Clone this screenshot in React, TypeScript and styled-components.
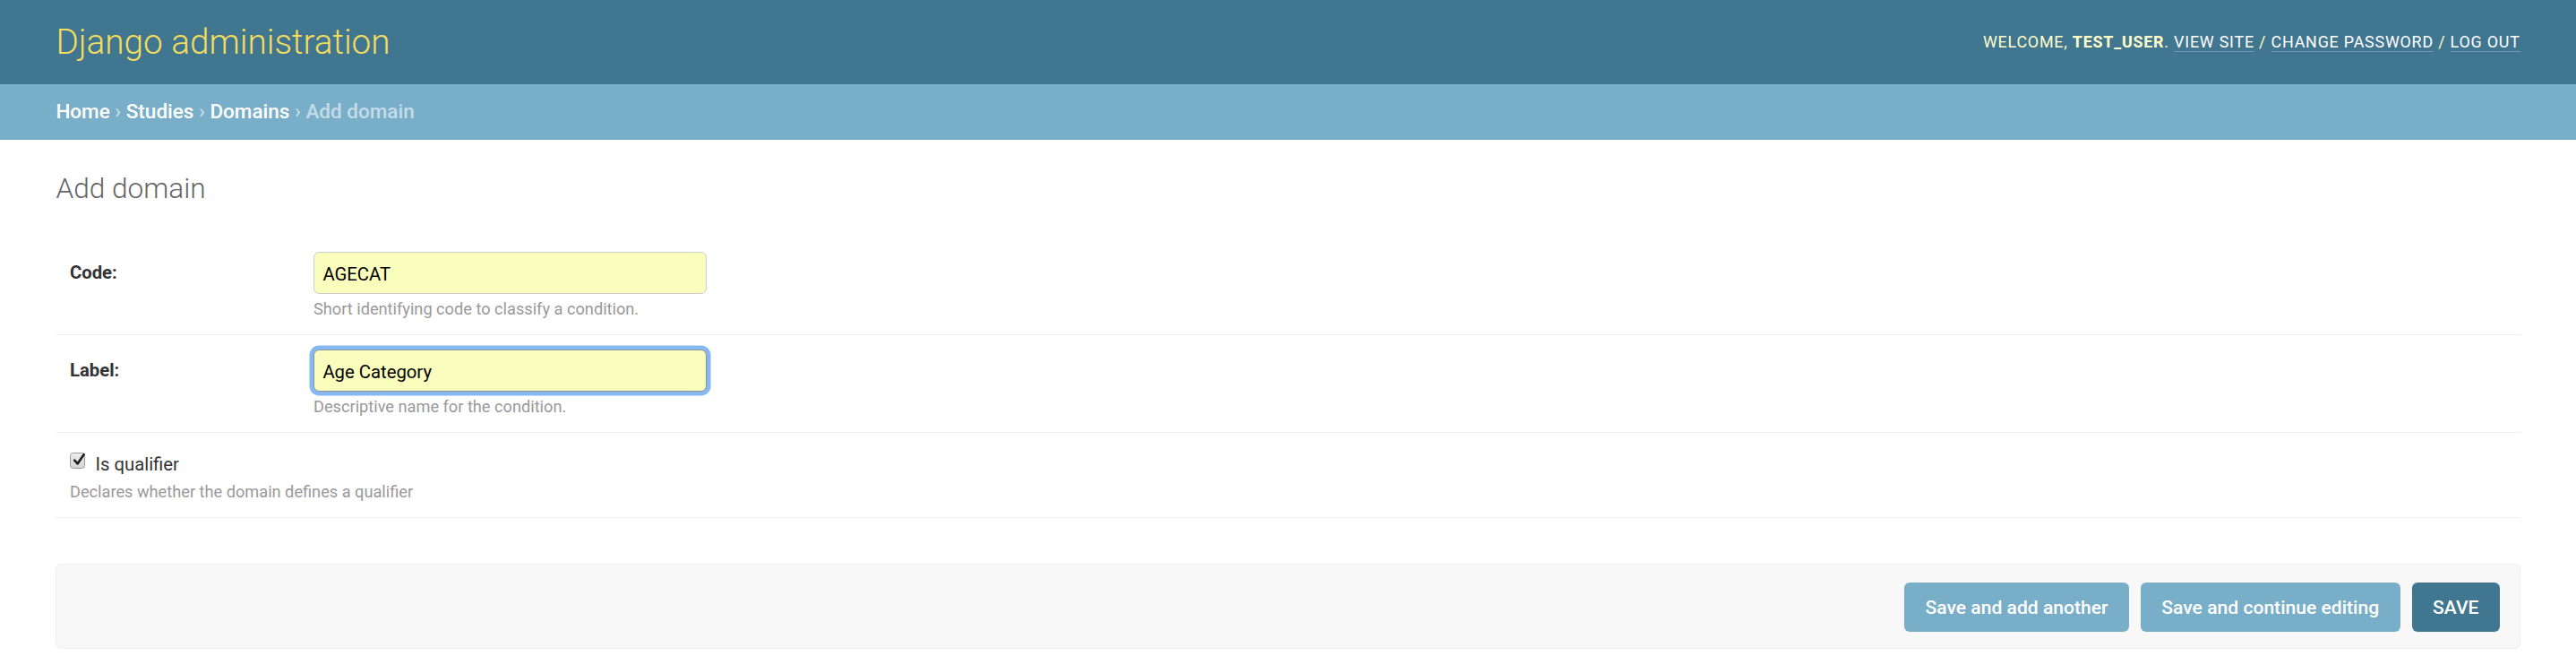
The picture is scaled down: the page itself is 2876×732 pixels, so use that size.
import React from "react";
import styled, { createGlobalStyle } from "styled-components";

const GlobalStyle = createGlobalStyle`
  html, body { margin: 0; padding: 0; background: #fff; }
  body {
    font-family: Roboto, "Liberation Sans", Arial, sans-serif;
    color: #333;
    font-size: 21.8px;
  }
  * { box-sizing: border-box; }
`;

const Header = styled.header`
  display: flex;
  align-items: center;
  justify-content: space-between;
  height: 93.6px;
  padding: 0 62.4px;
  background: #417690;
  color: #ffc;
`;

const Brand = styled.h1`
  margin: 0;
  font-size: 38.7px;
  font-weight: 300;
  line-height: 62.4px;
  color: #f5dd5d;
`;

const UserTools = styled.div`
  font-size: 17.9px;
  font-weight: 400;
  letter-spacing: 0.78px;
  line-height: 62.4px;
  text-transform: uppercase;
  color: #ffc;
  strong { font-weight: 700; }
`;

const ToolLink = styled.a`
  color: #fff;
  text-decoration: none;
  border-bottom: 1.56px solid rgba(255, 255, 255, 0.25);
`;

const Breadcrumbs = styled.nav`
  background: #79aec8;
  padding: 15.6px 62.4px;
  font-size: 22.5px;
  font-weight: 500;
  line-height: 31.2px;
  color: #c4dce8;
`;

const Crumb = styled.a`
  color: #fff;
  text-decoration: none;
`;

const Content = styled.main`
  padding: 36px 62.4px 0;
`;

const Title = styled.h1`
  margin: 0 0 36.4px;
  font-size: 31.6px;
  font-weight: 300;
  color: #666;
`;

const Fieldset = styled.fieldset`
  margin: 0 0 51.5px;
  padding: 0;
  border: none;
`;

const FormRow = styled.div`
  padding: 15.6px;
  border-bottom: 1.56px solid #eee;
`;

const FieldLine = styled.div`
  display: flex;
  align-items: flex-start;
`;

const FieldLabel = styled.label`
  flex: 0 0 272px;
  padding-top: 13.5px;
  font-size: 20.3px;
  line-height: 1;
  font-weight: 700;
  color: #333;
`;

const TextInput = styled.input<{ $focused?: boolean }>`
  width: 439px;
  height: 47px;
  margin: 0;
  padding: 4px 9.4px 0;
  border: 1.56px solid ${(p) => (p.$focused ? "#8e9296" : "#ccc")};
  border-radius: 6.24px;
  background: #fafebd;
  font-family: Roboto, "Liberation Sans", Arial, sans-serif;
  font-size: 20.3px;
  color: #000;
  outline: none;
  box-shadow: ${(p) => (p.$focused ? "0 0 0 4.5px #86b8f3" : "none")};
`;

const Help = styled.div<{ $indent?: number }>`
  margin: ${(p) => (p.$indent ? "5.3px" : "6.9px")} 0 0 ${(p) => p.$indent ?? 0}px;
  font-size: 18.2px;
  line-height: 24.1px;
  color: #999;
`;

const CheckLine = styled.div`
  display: flex;
  align-items: center;
  height: 32px;
`;

const CheckBox = styled.span`
  position: relative;
  display: inline-flex;
  width: 17.5px;
  height: 17.5px;
  border: 1.2px solid #9a9a9a;
  border-radius: 3.5px;
  background: linear-gradient(#ececec, #d6d6d6);
  flex-shrink: 0;
  svg {
    position: absolute;
    left: 1px;
    top: -2px;
  }
`;

const CheckText = styled.label`
  margin-left: 11px;
  padding-top: 8px;
  font-size: 20.3px;
  color: #333;
`;

const SubmitRow = styled.div`
  display: flex;
  justify-content: flex-end;
  gap: 13px;
  padding: 19.5px 21.8px 18px;
  background: #f8f8f8;
  border: 1.56px solid #eee;
  border-radius: 6.24px;
`;

const Button = styled.button<{ $default?: boolean }>`
  height: 55.7px;
  padding: 0 23.4px;
  border: none;
  border-radius: 6.24px;
  background: ${(p) => (p.$default ? "#417690" : "#79aec8")};
  color: #fff;
  font-family: Roboto, "Liberation Sans", Arial, sans-serif;
  font-size: 21.1px;
  font-weight: 500;
  text-transform: ${(p) => (p.$default ? "uppercase" : "none")};
  cursor: pointer;
`;

export default function App() {
  return (
    <>
      <GlobalStyle />
      <Header>
        <Brand>Django administration</Brand>
        <UserTools>
          Welcome, <strong>test_user</strong>. <ToolLink href="#">View site</ToolLink> /{" "}
          <ToolLink href="#">Change password</ToolLink> / <ToolLink href="#">Log out</ToolLink>
        </UserTools>
      </Header>
      <Breadcrumbs>
        <Crumb href="#">Home</Crumb> › <Crumb href="#">Studies</Crumb> ›{" "}
        <Crumb href="#">Domains</Crumb> › Add domain
      </Breadcrumbs>
      <Content>
        <Title>Add domain</Title>
        <Fieldset>
          <FormRow>
            <FieldLine>
              <FieldLabel htmlFor="id_code">Code:</FieldLabel>
              <TextInput id="id_code" type="text" defaultValue="AGECAT" />
            </FieldLine>
            <Help $indent={272}>Short identifying code to classify a condition.</Help>
          </FormRow>
          <FormRow>
            <FieldLine>
              <FieldLabel htmlFor="id_label">Label:</FieldLabel>
              <TextInput id="id_label" type="text" defaultValue="Age Category" $focused />
            </FieldLine>
            <Help $indent={272}>Descriptive name for the condition.</Help>
          </FormRow>
          <FormRow>
            <CheckLine>
              <CheckBox role="checkbox" aria-checked="true">
                <svg width="17" height="17" viewBox="0 0 17 17">
                  <path
                    d="M3.2 9.6 L6.6 13.4 L13.6 3.2"
                    fill="none"
                    stroke="#1e1e1e"
                    strokeWidth="2.6"
                    strokeLinecap="round"
                    strokeLinejoin="round"
                  />
                </svg>
              </CheckBox>
              <CheckText>Is qualifier</CheckText>
            </CheckLine>
            <Help>Declares whether the domain defines a qualifier</Help>
          </FormRow>
        </Fieldset>
        <SubmitRow>
          <Button type="button">Save and add another</Button>
          <Button type="button">Save and continue editing</Button>
          <Button type="submit" $default>
            Save
          </Button>
        </SubmitRow>
      </Content>
    </>
  );
}
